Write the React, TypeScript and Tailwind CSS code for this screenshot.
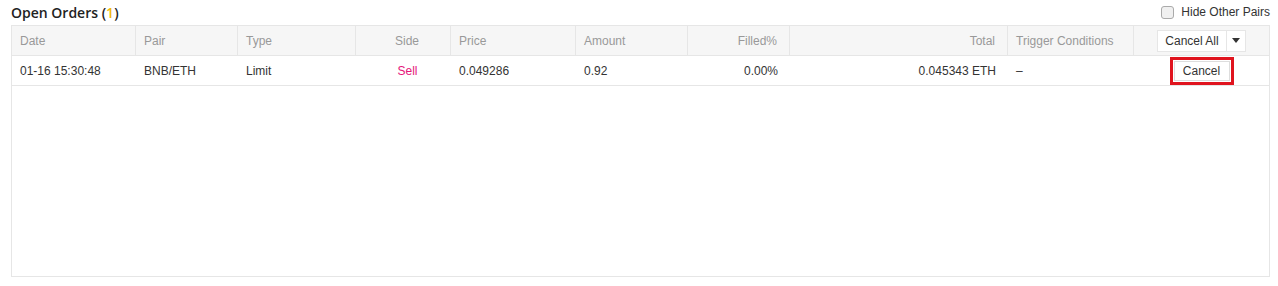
import React from "react";

const cols = [
  { label: "Date", w: 125, align: "left" },
  { label: "Pair", w: 102, align: "left" },
  { label: "Type", w: 118, align: "left" },
  { label: "Side", w: 95, align: "center" },
  { label: "Price", w: 125, align: "left" },
  { label: "Amount", w: 112, align: "left" },
  { label: "Filled%", w: 102, align: "right" },
  { label: "Total", w: 218, align: "right" },
  { label: "Trigger Conditions", w: 126, align: "left" },
];

const row = ["01-16 15:30:48", "BNB/ETH", "Limit", "Sell", "0.049286", "0.92", "0.00%", "0.045343 ETH", "–"];

function alignCls(a: string) {
  if (a === "right") return "justify-end pl-2 pr-[12px]";
  if (a === "center") return "justify-center pl-[8px]";
  return "justify-start pl-[8px]";
}

export default function App() {
  return (
    <div
      className="w-[1278px] h-[286px] bg-white pl-[11px] pr-[8px] text-[12px] text-[#333]"
      style={{ fontFamily: '"Liberation Sans", Arial, sans-serif' }}
    >
      <div className="h-[25px] flex items-center justify-between">
        <div
          className="text-[14px] font-semibold text-[#222] leading-none pt-[1px]"
          style={{ fontFamily: '"Open Sans", "Liberation Sans", sans-serif' }}
        >
          Open Orders (<span className="text-[#f0b90b]">1</span>)
        </div>
        <label className="flex items-center gap-[7px] text-[12px] text-[#333] pb-[1px]">
          <span className="w-[13px] h-[13px] rounded-[3px] border border-[#aaa] bg-[#f0f0f0]" />
          Hide Other Pairs
        </label>
      </div>
      <div className="h-[252px] border border-[#e6e6e6] flex flex-col">
        <div className="h-[30px] flex bg-[#f6f6f6] border-b border-[#e6e6e6] text-[#999] shrink-0">
          {cols.map((c, i) => (
            <div
              key={c.label}
              className={`h-full flex items-center border-r border-[#e6e6e6] ${alignCls(c.align)}`}
              style={{ width: i === 0 ? c.w - 1 : c.w }}
            >
              {c.label}
            </div>
          ))}
          <div className="flex-1 flex items-center justify-center">
            <div className="flex h-[22px] bg-white border border-[#e6e6e6] text-[#333]">
              <div className="px-[7px] flex items-center border-r border-[#e6e6e6]">Cancel All</div>
              <div className="w-[18px] flex items-center justify-center">
                <svg width="8" height="5" viewBox="0 0 8 5">
                  <path d="M0 0 L8 0 L4 5 Z" fill="#333" />
                </svg>
              </div>
            </div>
          </div>
        </div>
        <div className="h-[30px] flex border-b border-[#e6e6e6] shrink-0">
          {cols.map((c, i) => (
            <div
              key={c.label}
              className={`h-full flex items-center ${alignCls(c.align)} ${i === 3 ? "text-[#e5167a]" : ""}`}
              style={{ width: i === 0 ? c.w - 1 : c.w }}
            >
              {row[i]}
            </div>
          ))}
          <div className="flex-1 flex items-center justify-center">
            <div className="w-[64px] h-[28px] border-[3px] border-[#e0141e] flex items-center justify-center">
              <div className="w-[56px] h-[20px] bg-white border border-[#ddd] flex items-center justify-center text-[#333]">
                Cancel
              </div>
            </div>
          </div>
        </div>
      </div>
    </div>
  );
}
